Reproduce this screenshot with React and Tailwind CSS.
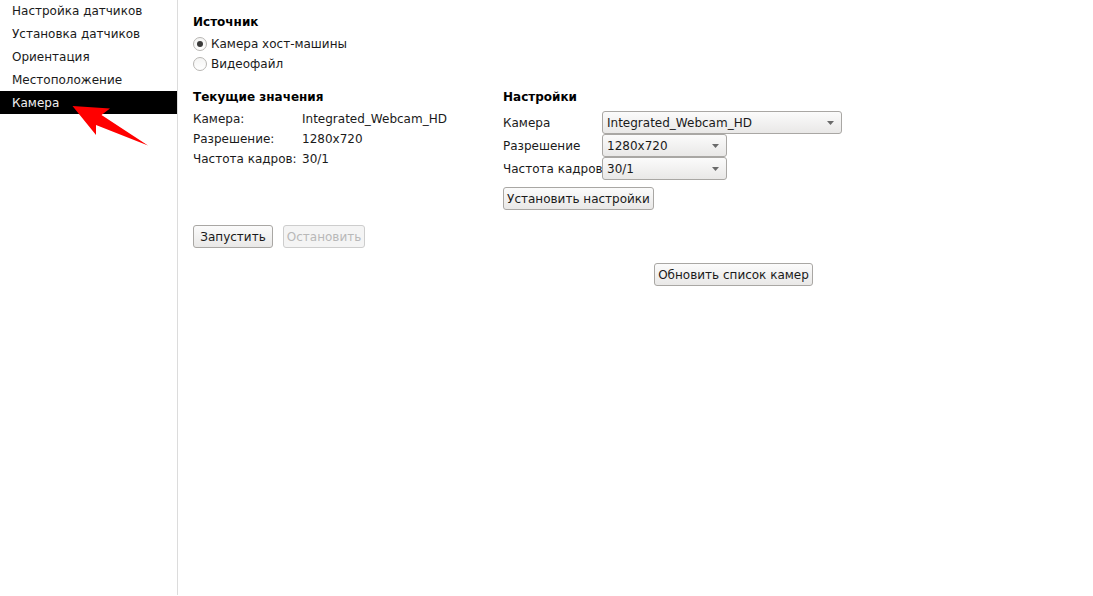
import React from 'react';

const sensorItems = ['Настройка датчиков', 'Установка датчиков', 'Ориентация', 'Местоположение', 'Камера'];

const Radio = ({ checked, label }) => (
  <div className="flex items-center h-5">
    <span className="w-[14px] h-[14px] rounded-full border border-[#b8b6b3] bg-gradient-to-b from-[#f4f4f3] to-[#ffffff] flex items-center justify-center mr-1 shrink-0">
      {checked && <span className="w-[6px] h-[6px] rounded-full bg-[#3a3a3a]" />}
    </span>
    <span>{label}</span>
  </div>
);

const Btn = ({ children, disabled, className = '' }) => (
  <button
    className={`h-[23px] px-[3px] rounded-[3px] border whitespace-nowrap flex items-center justify-center ${
      disabled
        ? 'border-[#cdcdcd] bg-[#f4f4f4] text-[#b8b8b8]'
        : 'border-[#a9a7a4] bg-gradient-to-b from-[#fbfbfb] to-[#e9e8e7] text-[#1a1a1a]'
    } ${className}`}
  >
    {children}
  </button>
);

const Select = ({ value, className = '' }) => (
  <div className={`h-[23px] rounded-[3px] border border-[#a9a7a4] bg-gradient-to-b from-[#fbfbfb] to-[#e9e8e7] flex items-center justify-between pl-1 pr-[7px] ${className}`}>
    <span>{value}</span>
    <svg width="7" height="4" viewBox="0 0 7 4"><path d="M0 0h7L3.5 4z" fill="#6a6a6a" /></svg>
  </div>
);

const ValueRow = ({ label, value }) => (
  <div className="flex h-5 items-center">
    <span className="w-[109px] shrink-0 whitespace-nowrap">{label}</span>
    <span>{value}</span>
  </div>
);

const SettingRow = ({ label, value, selectClass }) => (
  <div className="flex h-[23px] items-center">
    <span className="w-[99px] shrink-0 whitespace-nowrap">{label}</span>
    <Select value={value} className={selectClass} />
  </div>
);

export default function App() {
  return (
    <div className="relative flex w-[1093px] h-[596px] overflow-hidden bg-white text-[12px] text-[#1a1a1a] font-['DejaVu_Sans',sans-serif]">
      <div className="w-[178px] h-full border-r border-[#dcdcdc] mt-[-1px] shrink-0">
        {sensorItems.map((item) => (
          <div
            key={item}
            className={`h-[23px] pl-3 flex items-center ${item === 'Камера' ? 'bg-black text-[#f0f0f0]' : ''}`}
          >
            {item}
          </div>
        ))}
      </div>

      <div className="pl-[15px] pt-[13px] flex-1">
        <div className="font-bold text-black h-[18px] flex items-center">Источник</div>
        <div className="mt-[3px]">
          <Radio checked label="Камера хост-машины" />
          <Radio label="Видеофайл" />
        </div>

        <div className="flex mt-[14px]">
          <div className="w-[310px] shrink-0">
            <div className="font-bold text-black h-[18px] flex items-center">Текущие значения</div>
            <div className="mt-[3px]">
              <ValueRow label="Камера:" value="Integrated_Webcam_HD" />
              <ValueRow label="Разрешение:" value="1280x720" />
              <ValueRow label="Частота кадров:" value="30/1" />
            </div>
            <div className="flex gap-[10px] mt-[56px]">
              <Btn className="w-[80px]">Запустить</Btn>
              <Btn disabled className="w-[82px]">Остановить</Btn>
            </div>
          </div>
          <div>
            <div className="font-bold text-black h-[18px] flex items-center">Настройки</div>
            <div className="mt-[5px]">
              <SettingRow label="Камера" value="Integrated_Webcam_HD" selectClass="w-[240px]" />
              <SettingRow label="Разрешение" value="1280x720" selectClass="w-[125px]" />
              <SettingRow label="Частота кадров" value="30/1" selectClass="w-[125px]" />
            </div>
            <Btn className="w-[151px] mt-[7px]">Установить настройки</Btn>
          </div>
        </div>

        <Btn className="w-[159px] ml-[461px] mt-[15px]">Обновить список камер</Btn>
      </div>

      <svg className="absolute left-0 top-0 pointer-events-none" width="160" height="150" viewBox="0 0 160 150">
        <polygon points="72.5,106 110,108.5 101.5,115 148,145.5 96,125 96,135" fill="#ff0000" />
      </svg>
    </div>
  );
}
